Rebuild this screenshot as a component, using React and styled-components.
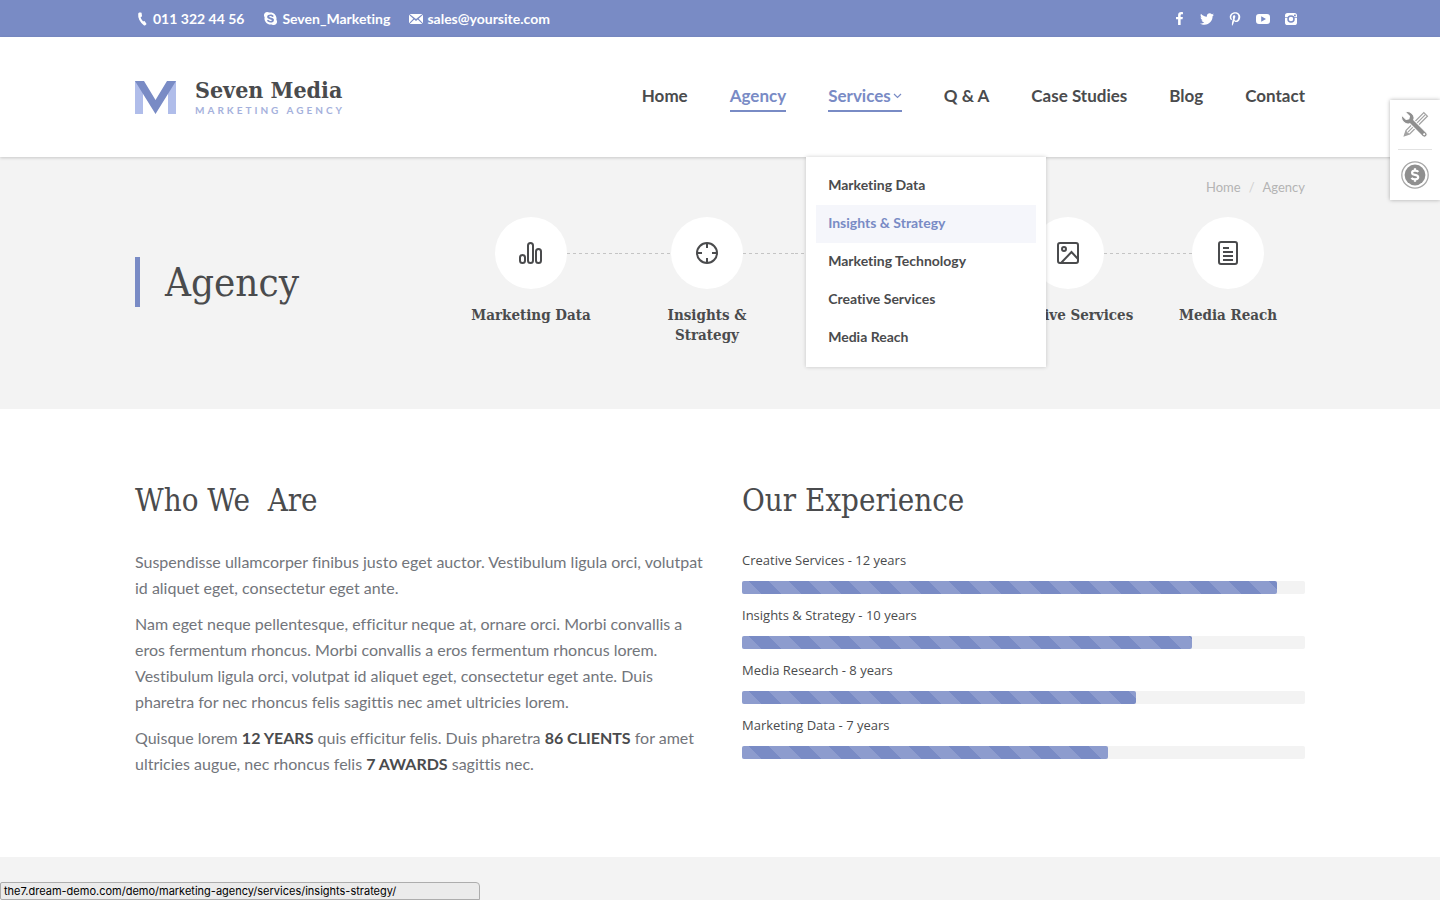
import React from "react";
import styled, { createGlobalStyle, css } from "styled-components";
import { FaFacebookF, FaTwitter, FaPinterestP, FaSkype } from "react-icons/fa";

const sans = '"Lato", "Liberation Sans", sans-serif';
const labelSans = '"Open Sans", "Noto Sans", sans-serif';
const serif = '"DejaVu Serif Condensed", "Liberation Serif", serif';
const accent = "#798bc5";
const ink = "#4a4b4d";

const GlobalStyle = createGlobalStyle`
  *, *::before, *::after { box-sizing: border-box; }
  body {
    margin: 0;
    background: #fff;
    color: #72757b;
    font: 16px/26px ${sans};
    font-variant-ligatures: no-common-ligatures;
  }
  a { color: inherit; text-decoration: none; }
  ul, ol { list-style: none; margin: 0; padding: 0; }
  h1, h2, p { margin: 0; }
  svg { display: block; flex: none; }
`;

const Page = styled.div`
  display: flex;
  flex-direction: column;
  min-height: 100vh;
`;

const Container = styled.div`
  width: 100%;
  max-width: 1210px;
  margin: 0 auto;
  padding: 0 20px;
`;

const TopBar = styled.div`
  background: ${accent};
  color: #fff;
`;

const TopBarInner = styled(Container)`
  display: flex;
  align-items: center;
  justify-content: space-between;
  min-height: 37px;
`;

const ContactList = styled.ul`
  display: flex;
  gap: 19px;
`;

const ContactLink = styled.a`
  display: flex;
  align-items: center;
  gap: 4px;
  font-size: 14px;
  line-height: 20px;
  font-weight: 700;
`;

const SocialList = styled.ul`
  display: flex;
`;

const SocialLink = styled.a`
  display: flex;
  align-items: center;
  justify-content: center;
  width: 28px;
  height: 28px;
`;

const Header = styled.header`
  position: relative;
  z-index: 2;
  background: #fff;
  box-shadow: 0 1px 3px rgba(0, 0, 0, 0.18);
`;

const HeaderInner = styled(Container)`
  display: flex;
  align-items: center;
  justify-content: space-between;
  min-height: 120px;
`;

const Logo = styled.a`
  display: flex;
  align-items: center;
  gap: 19px;
`;

const LogoText = styled.span`
  display: flex;
  flex-direction: column;
`;

const LogoName = styled.span`
  font-family: ${serif};
  font-size: 23px;
  line-height: 26px;
  font-weight: 700;
  color: ${ink};
`;

const LogoTagline = styled.span`
  font-size: 10px;
  line-height: 14px;
  font-weight: 700;
  letter-spacing: 3px;
  text-transform: uppercase;
  color: #a5b1dc;
`;

const Menu = styled.ul`
  display: flex;
  gap: 42px;
`;

const MenuItem = styled.li`
  position: relative;
  display: flex;
  align-items: center;
  height: 120px;
`;

const MenuLink = styled.a`
  display: flex;
  align-items: center;
  gap: 2px;
  border-bottom: 2px solid ${(p) => (p.$active ? accent : "transparent")};
  color: ${(p) => (p.$active ? accent : ink)};
  font-size: 17px;
  line-height: 28px;
  font-weight: 700;
  white-space: nowrap;
`;

const SubMenu = styled.ul`
  position: absolute;
  top: 100%;
  left: -22px;
  width: 240px;
  padding: 10px;
  background: #fff;
  box-shadow: 0 0 4px rgba(0, 0, 0, 0.2);
`;

const SubMenuLink = styled.a`
  display: block;
  padding: 7px 12px 9px;
  font-size: 14px;
  line-height: 22px;
  font-weight: 700;
  color: ${(p) => (p.$active ? accent : ink)};
  background: ${(p) => (p.$active ? "#f5f6fb" : "transparent")};
`;

const Hero = styled.section`
  background: #f3f3f3;
  padding: 20px 0 64px;
`;

const Breadcrumbs = styled.ol`
  display: flex;
  justify-content: flex-end;
  gap: 8px;
  font-size: 13px;
  line-height: 20px;
  color: #b4b4b4;
`;

const Separator = styled.li`
  color: #d0d0d0;
`;

const HeroRow = styled.div`
  display: grid;
  grid-template-columns: 308fr 862fr;
  margin-top: 20px;
  align-items: start;
`;

const PageTitle = styled.h1`
  margin-top: 40px;
  padding-left: 25px;
  border-left: 5px solid ${accent};
  font: 400 40px/50px ${serif};
  color: ${ink};
`;

const Steps = styled.ol`
  display: grid;
  grid-template-columns: 176fr 176fr 176fr 194fr 126fr;
  padding-right: 14px;
`;

const Step = styled.li`
  display: flex;
  flex-direction: column;
  gap: 16px;
  text-align: center;
`;

const StepTrack = styled.div`
  display: flex;
  align-items: center;
`;

const Dash = styled.span`
  flex: 1;
  height: 1px;
  ${(p) =>
    p.$visible &&
    css`
      background: repeating-linear-gradient(90deg, #c4c4c4 0 3px, transparent 3px 6px);
    `}
`;

const StepCircle = styled.span`
  display: flex;
  align-items: center;
  justify-content: center;
  width: 72px;
  height: 72px;
  border-radius: 50%;
  background: #fff;
  color: ${ink};
`;

const StepLabel = styled.a`
  align-self: center;
  max-width: 140px;
  font: 700 15px/20px ${serif};
  color: ${ink};
`;

const Content = styled(Container)`
  display: grid;
  grid-template-columns: 1fr 1fr;
  gap: 44px;
  padding-top: 70px;
  padding-bottom: 80px;
`;

const SectionTitle = styled.h2`
  margin-bottom: 28px;
  font: 400 31px/42px ${serif};
  color: ${ink};
  white-space: pre-wrap;
`;

const Copy = styled.div`
  display: flex;
  flex-direction: column;
  gap: 10px;
  margin-right: -12px;

  strong { color: ${ink}; }
`;

const Bars = styled.div`
  display: flex;
  flex-direction: column;
  gap: 10px;
`;

const BarLabel = styled.div`
  margin-bottom: 10px;
  font: 13px/22px ${labelSans};
  color: ${ink};
`;

const BarTrack = styled.div`
  height: 13px;
  border-radius: 2px;
  background: #f3f3f3;
`;

const BarFill = styled.div`
  height: 100%;
  border-radius: 2px;
  background: ${accent}
    linear-gradient(
      45deg,
      rgba(255, 255, 255, 0.15) 25%,
      transparent 25% 50%,
      rgba(255, 255, 255, 0.15) 50% 75%,
      transparent 75%
    )
    0 100% / 40px 40px;
`;

const NextSection = styled.div`
  flex: 1;
  background: #f3f3f3;
`;

const ToolPanel = styled.aside`
  position: fixed;
  z-index: 3;
  top: 100px;
  right: 0;
  width: 50px;
  padding: 0 8px;
  background: #fff;
  box-shadow: 0 0 4px rgba(0, 0, 0, 0.3);
`;

const ToolButton = styled.button`
  display: flex;
  align-items: center;
  justify-content: center;
  width: 100%;
  height: 50px;
  padding: 0;
  border: 0;
  background: none;

  & + & { box-shadow: 0 -1px 0 #e2e2e2; }
`;

const StatusBar = styled.div`
  position: fixed;
  z-index: 3;
  left: 0;
  bottom: 0;
  width: 480px;
  max-width: 100%;
  padding: 0 3px;
  border: 1px solid #adadad;
  border-radius: 2px 4px 0 2px;
  background: #ebebeb;
  color: #000;
  font: 11px/16px "Inter", sans-serif;
`;

const PhoneIcon = () => (
  <svg width="14" height="14" viewBox="0 0 14 14" fill="#fff">
    <path d="M4.2 0.6 L6 .4 Q6.5.4 6.6 1 L7 4 Q7 4.5 6.5 4.7 L5.6 5 Q6 7.6 8.1 9.6 L8.9 9.1 Q9.4 8.9 9.7 9.3 L11.3 11.6 Q11.6 12.1 11.2 12.5 L10 13.5 Q9.4 13.8 8.8 13.3 Q2.6 8.2 3.2 1.8 Q3.4.8 4.2.6Z" />
  </svg>
);

const MailIcon = () => (
  <svg width="14" height="14" viewBox="0 0 14 14" fill="#fff">
    <path d="M.6 2h12.8L7 7Z" />
    <path d="M0 2.800l4.300 4L0 11.200Z" />
    <path d="M14 2.800v8.400L9.700 6.800Z" />
    <path d="M.7 12l4.500-4.400L7 9l1.800-1.400L13.300 12Z" />
  </svg>
);

const YoutubeIcon = () => (
  <svg width="14" height="14" viewBox="0 0 14 14" fill="#fff">
    <path fillRule="evenodd" d="M3 2h8q3 0 3 3v4q0 3-3 3H3q-3 0-3-3V5q0-3 3-3ZM5.200 4.200v5.600L10 7Z" />
  </svg>
);

const InstagramIcon = () => (
  <svg width="14" height="14" viewBox="0 0 14 14">
    <rect x="1" y="1" width="12" height="12" rx="2.6" fill="#fff" />
    <rect x="10" y="2.4" width="1.8" height="1.8" rx=".5" fill={accent} />
    <path d="M1 5.500h3M10 5.500h3" stroke={accent} strokeWidth=".7" />
    <circle cx="7" cy="7" r="3" fill="#fff" stroke={accent} strokeWidth="1.5" />
  </svg>
);

const LogoMark = () => (
  <svg width="41" height="33" viewBox="0 0 41 33">
    <path d="M0 0h8v33H0ZM33 0h8v33h-8Z" fill="#b0bdea" />
    <path d="M0 0h9l11.500 19L32 0h9L20.500 33Z" fill={accent} />
  </svg>
);

const CaretIcon = () => (
  <svg width="9" height="6" viewBox="0 0 9 6" fill="none" stroke="currentColor" strokeWidth="1.2">
    <path d="M1 1l3.500 3.400L8 1" />
  </svg>
);

const StepIcon = ({ children }) => (
  <svg width="24" height="24" viewBox="0 0 24 24" fill="none" stroke="currentColor" strokeWidth="2">
    {children}
  </svg>
);

const WrenchPencilIcon = () => (
  <svg width="28" height="28" viewBox="0 0 28 28">
    <g transform="rotate(45 14 14)" fill="none" stroke="#a3a3a3">
      <path d="M11.500 -1h5v25l-2.500 5-2.500-5Z" strokeWidth="1.3" />
      <path d="M14 -1v25" strokeWidth="1.2" />
      <path d="M12.400 25h3.200L14 28.500Z" fill="#a3a3a3" />
    </g>
    <g transform="rotate(-45 14 14)">
      <path
        d="M11.300 9.400 Q8 8 8 4 Q8 -.5 11.600 -2 V3.800 L14 5.400 16.400 3.800 V-2 Q20 -.5 20 4 Q20 8 16.700 9.400 V27 Q16.600 30 14 30 T11.300 27Z"
        fill="#8f8f8f"
        stroke="#fff"
        strokeWidth="1"
      />
      <circle cx="14" cy="27" r="1.1" fill="#fff" />
    </g>
  </svg>
);

const DollarIcon = () => (
  <svg width="28" height="28" viewBox="0 0 28 28">
    <circle cx="14" cy="14" r="13.2" fill="none" stroke="#a8a8a8" strokeWidth="1.3" />
    <circle cx="14" cy="14" r="10.4" fill="#8f8f8f" />
    <path
      d="M17.300 10.800Q16.600 9.700 14 9.700q-2.900 0-2.900 2 0 1.700 2.900 2.200 3.200.6 3.200 2.400 0 2-3.200 2-2.700 0-3.500-1.400M14 7.300v2.400M14 18.300v2.400"
      fill="none"
      stroke="#fff"
      strokeWidth="2.2"
    />
  </svg>
);

const contacts = [
  { text: "011 322 44 56", href: "tel:0113224456", icon: <PhoneIcon /> },
  { text: "Seven_Marketing", href: "skype:Seven_Marketing", icon: <FaSkype size={15} /> },
  { text: "sales@yoursite.com", href: "mailto:sales@yoursite.com", icon: <MailIcon /> },
];

const socials = [
  { name: "Facebook", icon: <FaFacebookF size={13} /> },
  { name: "Twitter", icon: <FaTwitter size={14} /> },
  { name: "Pinterest", icon: <FaPinterestP size={14} /> },
  { name: "YouTube", icon: <YoutubeIcon /> },
  { name: "Instagram", icon: <InstagramIcon /> },
];

const services = [
  "Marketing Data",
  "Insights & Strategy",
  "Marketing Technology",
  "Creative Services",
  "Media Reach",
];

const menu = [
  { text: "Home" },
  { text: "Agency", active: true },
  { text: "Services", active: true, children: services },
  { text: "Q & A" },
  { text: "Case Studies" },
  { text: "Blog" },
  { text: "Contact" },
];

const stepIcons = [
  <>
    <rect x="1" y="14" width="5" height="8" rx="2.5" />
    <rect x="9" y="2" width="5" height="20" rx="2.5" />
    <rect x="17" y="8" width="5" height="14" rx="2.5" />
  </>,
  <>
    <circle cx="12" cy="12" r="10" />
    <path d="M12 2v5M12 17v5M2 12h5M17 12h5" />
  </>,
  <>
    <rect x="3" y="3" width="18" height="18" rx="2" />
    <path d="M8 8h8v8H8Z" />
  </>,
  <>
    <rect x="2" y="2" width="20" height="20" rx="2" />
    <circle cx="8" cy="8" r="2" />
    <path d="M5 22L15.500 11 22 18" />
  </>,
  <>
    <rect x="3" y="1" width="18" height="22" rx="2" />
    <path d="M7 7h6M7 11h10M7 15h10M7 19h10" />
  </>,
];

const experience = [
  { text: "Creative Services - 12 years", value: 95 },
  { text: "Insights & Strategy - 10 years", value: 80 },
  { text: "Media Research - 8 years", value: 70 },
  { text: "Marketing Data - 7 years", value: 65 },
];

export default function App() {
  return (
    <Page>
      <GlobalStyle />
      <TopBar>
        <TopBarInner>
          <ContactList>
            {contacts.map((c) => (
              <li key={c.text}>
                <ContactLink href={c.href}>
                  {c.icon}
                  {c.text}
                </ContactLink>
              </li>
            ))}
          </ContactList>
          <SocialList>
            {socials.map((s) => (
              <li key={s.name}>
                <SocialLink href="#" aria-label={s.name}>
                  {s.icon}
                </SocialLink>
              </li>
            ))}
          </SocialList>
        </TopBarInner>
      </TopBar>

      <Header>
        <HeaderInner>
          <Logo href="#">
            <LogoMark />
            <LogoText>
              <LogoName>Seven Media</LogoName>
              <LogoTagline>Marketing Agency</LogoTagline>
            </LogoText>
          </Logo>
          <nav>
            <Menu>
              {menu.map((m) => (
                <MenuItem key={m.text}>
                  <MenuLink href="#" $active={m.active}>
                    {m.text}
                    {m.children && <CaretIcon />}
                  </MenuLink>
                  {m.children && (
                    <SubMenu>
                      {m.children.map((s) => (
                        <li key={s}>
                          <SubMenuLink href="#" $active={s === "Insights & Strategy"}>
                            {s}
                          </SubMenuLink>
                        </li>
                      ))}
                    </SubMenu>
                  )}
                </MenuItem>
              ))}
            </Menu>
          </nav>
        </HeaderInner>
      </Header>

      <Hero>
        <Container>
          <Breadcrumbs>
            <li>
              <a href="#">Home</a>
            </li>
            <Separator>/</Separator>
            <li>Agency</li>
          </Breadcrumbs>
          <HeroRow>
            <PageTitle>Agency</PageTitle>
            <Steps>
              {services.map((s, i) => (
                <Step key={s}>
                  <StepTrack>
                    <Dash $visible={i > 0} />
                    <StepCircle>
                      <StepIcon>{stepIcons[i]}</StepIcon>
                    </StepCircle>
                    <Dash $visible={i < services.length - 1} />
                  </StepTrack>
                  <StepLabel href="#">{s}</StepLabel>
                </Step>
              ))}
            </Steps>
          </HeroRow>
        </Container>
      </Hero>

      <Content>
        <section>
          <SectionTitle>{"Who We  Are"}</SectionTitle>
          <Copy>
            <p>
              Suspendisse ullamcorper finibus justo eget auctor. Vestibulum ligula orci, volutpat id
              aliquet eget, consectetur eget ante.
            </p>
            <p>
              Nam eget neque pellentesque, efficitur neque at, ornare orci. Morbi convallis a eros
              fermentum rhoncus. Morbi convallis a eros fermentum rhoncus lorem. Vestibulum ligula
              orci, volutpat id aliquet eget, consectetur eget ante. Duis pharetra for nec rhoncus
              felis sagittis nec amet ultricies lorem.
            </p>
            <p>
              Quisque lorem <strong>12 YEARS</strong> quis efficitur felis. Duis pharetra{" "}
              <strong>86 CLIENTS</strong> for amet ultricies augue, nec rhoncus felis{" "}
              <strong>7 AWARDS</strong> sagittis nec.
            </p>
          </Copy>
        </section>
        <section>
          <SectionTitle>Our Experience</SectionTitle>
          <Bars>
            {experience.map((e) => (
              <div key={e.text}>
                <BarLabel>{e.text}</BarLabel>
                <BarTrack
                  role="progressbar"
                  aria-label={e.text}
                  aria-valuenow={e.value}
                  aria-valuemin={0}
                  aria-valuemax={100}
                >
                  <BarFill style={{ width: `${e.value}%` }} />
                </BarTrack>
              </div>
            ))}
          </Bars>
        </section>
      </Content>

      <NextSection />

      <ToolPanel>
        <ToolButton type="button" aria-label="Customize">
          <WrenchPencilIcon />
        </ToolButton>
        <ToolButton type="button" aria-label="Purchase">
          <DollarIcon />
        </ToolButton>
      </ToolPanel>
      <StatusBar>the7.dream-demo.com/demo/marketing-agency/services/insights-strategy/</StatusBar>
    </Page>
  );
}
